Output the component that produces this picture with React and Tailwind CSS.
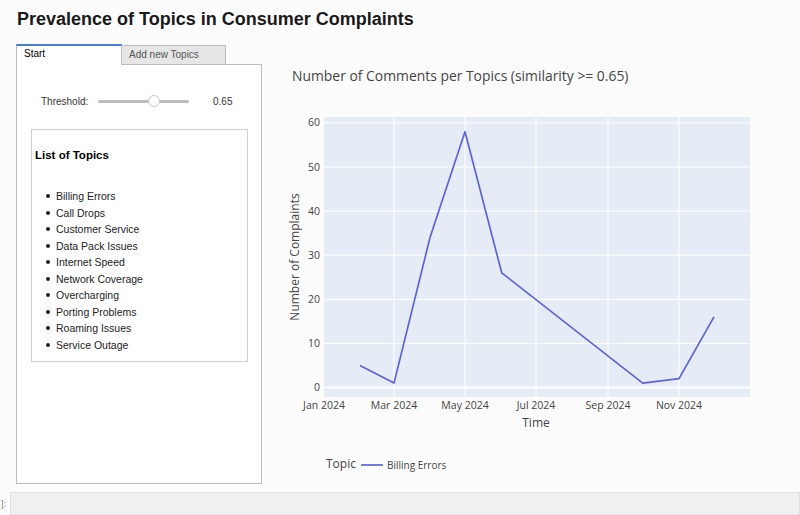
import React from "react";

const topics = [
  "Billing Errors",
  "Call Drops",
  "Customer Service",
  "Data Pack Issues",
  "Internet Speed",
  "Network Coverage",
  "Overcharging",
  "Porting Problems",
  "Roaming Issues",
  "Service Outage",
];

/* plot area in svg coordinates */
const PX0 = 44;
const PX1 = 470;
const PY0 = 57;
const PY1 = 337;
const yOf = (v) => 327.5 - v * 4.41;

const yTicks = [0, 10, 20, 30, 40, 50, 60];
const xTicks = [
  { x: 44, label: "Jan 2024" },
  { x: 114, label: "Mar 2024" },
  { x: 185, label: "May 2024" },
  { x: 256, label: "Jul 2024" },
  { x: 328, label: "Sep 2024" },
  { x: 399, label: "Nov 2024" },
];

const points = [
  [80, 5],
  [114, 1],
  [150, 34],
  [185, 58],
  [221.7, 26],
  [362.7, 1],
  [399, 2],
  [434, 16],
];

function Chart() {
  const line = points.map(([x, v]) => `${x},${yOf(v).toFixed(1)}`).join(" ");
  return (
    <svg width="520" height="420" className="block" style={{ fontFamily: '"Open Sans", Verdana, sans-serif' }}>
      <text x="12" y="21" fontSize="13.9" fill="#444">
        Number of Comments per Topics (similarity &gt;= 0.65)
      </text>

      <rect x={PX0} y={PY0} width={PX1 - PX0} height={PY1 - PY0} fill="#e5ecf6" />

      {/* grille */}
      {yTicks.slice(1).map((v) => (
        <line key={v} x1={PX0} x2={PX1} y1={yOf(v)} y2={yOf(v)} stroke="#fff" strokeWidth="1" />
      ))}
      {xTicks.slice(1).map((t) => (
        <line key={t.label} x1={t.x} x2={t.x} y1={PY0} y2={PY1} stroke="#fff" strokeWidth="1" />
      ))}
      <line x1={PX0} x2={PX1} y1={yOf(0)} y2={yOf(0)} stroke="#fff" strokeWidth="2" />

      {/* axes */}
      {yTicks.map((v) => (
        <text key={v} x="40" y={yOf(v) + 3.5} fontSize="10.5" fill="#444" textAnchor="end">
          {v}
        </text>
      ))}
      {xTicks.map((t) => (
        <text key={t.label} x={t.x} y="349" fontSize="10.5" fill="#444" textAnchor="middle">
          {t.label}
        </text>
      ))}
      <text x="256" y="367" fontSize="12" fill="#444" textAnchor="middle">
        Time
      </text>
      <text x="19" y="197" fontSize="12" fill="#444" textAnchor="middle" transform="rotate(-90 19 197)">
        Number of Complaints
      </text>

      <polyline points={line} fill="none" stroke="#5d63dc" strokeWidth="1.7" strokeLinejoin="round" />

      {/* légende */}
      <text x="46" y="408" fontSize="12" fill="#444">
        Topic
      </text>
      <line x1="81" x2="103" y1="405" y2="405" stroke="#5d63dc" strokeWidth="1.7" />
      <text x="107" y="409" fontSize="10" fill="#444">
        Billing Errors
      </text>
    </svg>
  );
}

export default function App() {
  return (
    <div className="w-[800px] h-[515px] overflow-hidden bg-[#fcfcfc] relative" style={{ fontFamily: '"Liberation Sans", Arial, sans-serif' }}>
      <h1 className="pl-[17px] pt-[8px] h-[44px] text-[18px] leading-[22px] font-bold text-[#1a1a1a]">
        Prevalence of Topics in Consumer Complaints
      </h1>

      <div className="flex">
        {/* ---- Panneau gauche ---- */}
        <div className="ml-[16px] w-[246px] flex flex-col">
          <div className="flex h-[20px]">
            <div className="w-[106px] bg-white border-t-2 border-t-[#4a7fd4] border-l border-r border-[#bdbdbd] text-[10px] text-black pl-[7px] leading-[16px] relative z-10 -mb-px h-[21px]">
              Start
            </div>
            <div className="w-[104px] mt-px bg-[#e6e6e6] border border-b-0 border-[#bdbdbd] border-l-0 text-[10px] text-[#555] pl-[7px] leading-[17px]">
              Add new Topics
            </div>
          </div>
          <div className="h-[420px] bg-white border border-[#bdbdbd] px-[14px]">
            <div className="flex items-center h-[18px] mt-[27px] pl-[10px] text-[10px] text-[#333]">
              <span className="w-[57px]">Threshold:</span>
              <div className="relative w-[91px] h-[12px] flex items-center">
                <div className="w-full h-[3px] rounded bg-[#bdbdbd]" />
                <div className="absolute left-[50px] top-0 w-[12px] h-[12px] rounded-full bg-white border border-[#c8c8c8]" />
              </div>
              <span className="ml-[24px]">0.65</span>
            </div>

            <div className="mt-[19px] w-[217px] h-[233px] border border-[#cfcfcf] pl-[3px]">
              <h2 className="mt-[17px] text-[11.5px] leading-[16px] font-bold text-black">List of Topics</h2>
              <ul className="mt-[25px] pl-[11px] text-[10.5px] leading-[16.5px] text-[#222]">
                {topics.map((t) => (
                  <li key={t} className="flex items-center">
                    <span className="w-[4px] h-[4px] rounded-full bg-[#222] mr-[6px]" />
                    {t}
                  </li>
                ))}
              </ul>
            </div>
          </div>
        </div>

        {/* ---- Graphique ---- */}
        <div className="ml-[18px] mt-[16px]">
          <Chart />
        </div>
      </div>

      {/* ---- Cellule du notebook ---- */}
      <div className="absolute left-0 top-[492px] w-[800px] flex items-center">
        <span className="w-[10px] pl-px text-[9px] text-[#888] leading-[22px]">]:</span>
        <div className="flex-1 h-[23px] bg-[#f0f0f0] border border-[#e0e0e0]" />
      </div>
    </div>
  );
}
